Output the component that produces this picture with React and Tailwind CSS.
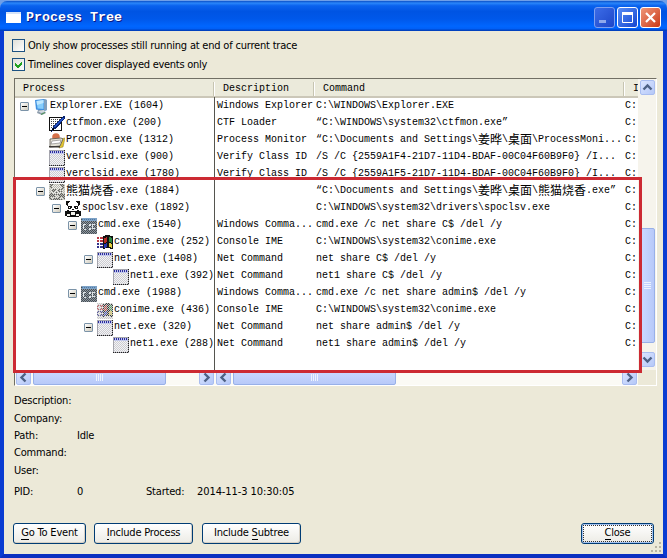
import React from "react";

const CJK = /([\u4e00-\u9fff]+)/;

// Fixed-pitch text: Latin cells are 6px wide, ideographs 12px.
function Cell({ children }) {
  return children.split(CJK).map((part, i) =>
    CJK.test(part) ? (
      <span key={i} className="-mt-[2px] font-['Noto_Sans_CJK_SC',sans-serif] text-[12px] leading-none">{part}</span>
    ) : (
      <span key={i}>{part}</span>
    )
  );
}

function Svg({ children }) {
  return (
    <svg width="16" height="16" viewBox="0 0 16 16" shapeRendering="crispEdges" className="block shrink-0">
      {children}
    </svg>
  );
}

function Dither({ id, color }) {
  return (
    <>
      <defs>
        <pattern id={id} width="2" height="2" patternUnits="userSpaceOnUse">
          <path d="M0 0h1v1H0zM1 1h1v1H1z" fill={color} />
        </pattern>
      </defs>
      <rect width="16" height="16" fill={`url(#${id})`} />
    </>
  );
}

function ExplorerIcon() {
  return (
    <svg width="16" height="16" viewBox="0 0 16 16" className="block shrink-0">
      <path d="M2 1l9-1 3 1v10l-3 1-8-1.500z" fill="#3f8fe0" />
      <path d="M3.500 2l7-1v9l-6-.5z" fill="#86cdfb" />
      <path d="M3.500 2l7-1v3L4 6z" fill="#bfe8ff" />
      <path d="M11 0l3 1v10l-3 1z" fill="#7f9fbe" />
      <path d="M5 11h6l2 3-4 2-5-2z" fill="#8d9cac" />
      <path d="M5 12l6-1 1 2-4 1z" fill="#d3dbe2" />
      <path d="M8 15l4-2v1l-4 2z" fill="#4f9a55" />
    </svg>
  );
}

function PenIcon() {
  return (
    <Svg>
      <path d="M0 1h13v14H0z" fill="#111" />
      <path d="M1 2h11v12H1z" fill="#fff" />
      <path d="M2 3.500h9M2 5.500h8M2 7.500h6M2 9.500h4M2 11.500h3" stroke="#444" strokeDasharray="1 1" />
      <path d="M15 0h1v2l-4 5-4 5-5 3-1 1 1-3 3-5 5-5z" fill="#0a2470" />
      <path d="M14 2L6 11" stroke="#2452c8" strokeWidth="1.500" />
      <path d="M4 12l-2 3 4-2z" fill="#000" />
    </Svg>
  );
}

function ProcmonIcon() {
  return (
    <svg width="16" height="16" viewBox="0 0 16 16" className="block shrink-0">
      <path d="M11 6l5-1-2 9-4 1z" fill="#e1c431" stroke="#8a7620" strokeWidth=".5" />
      <circle cx="7" cy="4" r="3.800" fill="#d5714a" />
      <path d="M1 6l11-1 2 1-3 7-10 1z" fill="#e4e2d6" stroke="#55524a" strokeWidth=".8" />
      <path d="M3 8l9-1-1 3-9 1z" fill="#fff" stroke="#777" strokeWidth=".6" />
      <path d="M0 13h11v1.500H0z" fill="#3d3a35" />
    </svg>
  );
}

function WindowIcon({ id }) {
  return (
    <Svg>
      <rect width="16" height="16" fill="#f3f3f5" />
      <Dither id={id} color="#cdcdd2" />
      <path d="M0 0h16v1H0zM0 0h1v16H0zM15 0h1v16h-1zM0 15h16v1H0z" fill="#a5a5ad" />
      <path d="M1 1h14v3H1z" fill="#c3c9ec" />
      <path d="M1 2h14" stroke="#2a2a9c" strokeWidth="2" strokeDasharray="1 1" />
      <path d="M15.500 0v16M0 15.500h16" stroke="#222" strokeDasharray="1 1" />
    </Svg>
  );
}

function PandaArt() {
  return (
    <>
      <path d="M1 0h4v1h6V0h4v4h-1v6H2V4H1z" fill="#111" />
      <path d="M4 1h8v1h1v3h1v4h-2v1H4V9H2V5h1V2h1z" fill="#fff" />
      <path d="M3 5h4v2H6v1H3zM9 5h4v3h-3V7H9zM7 8h2v1H7z" fill="#111" />
      <path d="M4 6h1v1H4zM11 6h1v1h-1z" fill="#fff" />
      <path d="M0 10h16v5h-2v1H2v-1H0z" fill="#111" />
      <path d="M6 11h4v3H6zM2 13h3v2H2zM11 13h3v2h-3z" fill="#f4f4ee" />
    </>
  );
}

function PandaIcon() {
  return <Svg><PandaArt /></Svg>;
}

function PandaGhostIcon() {
  return (
    <Svg>
      <rect width="16" height="16" fill="#dcdcd4" />
      <g opacity=".6"><PandaArt /></g>
      <Dither id="panda-ghost" color="#b8b8b0" />
    </Svg>
  );
}

function CmdIcon({ id }) {
  return (
    <Svg>
      <rect width="16" height="16" fill="#4a4e52" />
      <Dither id={id} color="#8d9aa4" />
      <path d="M1 0h15v3H1z" fill="#7da2c6" />
      <path d="M1 1.500h14" stroke="#4e78a4" strokeDasharray="1 1" />
      <path d="M5 6H3L2 7v3l1 1h2M8 6h1v1H8zM8 10h1v1H8zM14 7l-1-1-2 1v3l2 1 1-1" fill="none" stroke="#dfe5e8" />
    </Svg>
  );
}

function FlagArt() {
  return (
    <>
      <path d="M6 1l3-1h3l2 1h2v13h-2l-2-1H9l-2 1H6z" fill="#111" />
      <path d="M7 3l3-1v5L7 8z" fill="#b52b24" />
      <path d="M12 2l3 1v5l-3-1z" fill="#2d8a44" />
      <path d="M7 9l3-1v4l-3 1z" fill="#2636b0" />
      <path d="M12 8l3 1v4l-3-1z" fill="#e3cf3c" />
      <path d="M0 3h2M3 3h3M0 6h2M3 6h3" stroke="#b83a44" strokeWidth="2" />
      <path d="M0 9h2M3 9h3M0 12h2M3 12h3" stroke="#33338c" strokeWidth="2" />
    </>
  );
}

function FlagIcon() {
  return <Svg><FlagArt /></Svg>;
}

function FlagGhostIcon() {
  return (
    <Svg>
      <rect width="16" height="16" fill="#ededed" />
      <g opacity=".8"><FlagArt /></g>
      <Dither id="flag-ghost" color="#c8c8c8" />
    </Svg>
  );
}

const INDENT = ["pl-[5px]", "pl-[21px]", "pl-[37px]", "pl-[53px]", "pl-[69px]", "pl-[85px]"];

const ROWS = [
  { level: 0, open: true, icon: <ExplorerIcon />, name: "Explorer.EXE (1604)", desc: "Windows Explorer", cmd: "C:\\WINDOWS\\Explorer.EXE" },
  { level: 1, icon: <PenIcon />, name: "ctfmon.exe (200)", desc: "CTF Loader", cmd: "“C:\\WINDOWS\\system32\\ctfmon.exe”" },
  { level: 1, icon: <ProcmonIcon />, name: "Procmon.exe (1312)", desc: "Process Monitor", cmd: "“C:\\Documents and Settings\\姜晔\\桌面\\ProcessMoni..." },
  { level: 1, icon: <WindowIcon id="w1" />, name: "verclsid.exe (900)", desc: "Verify Class ID", cmd: "/S /C {2559A1F4-21D7-11D4-BDAF-00C04F60B9F0} /I..." },
  { level: 1, icon: <WindowIcon id="w2" />, name: "verclsid.exe (1780)", desc: "Verify Class ID", cmd: "/S /C {2559A1F5-21D7-11D4-BDAF-00C04F60B9F0} /I..." },
  { level: 1, open: true, icon: <PandaGhostIcon />, name: "熊猫烧香.exe (1884)", desc: "", cmd: "“C:\\Documents and Settings\\姜晔\\桌面\\熊猫烧香.exe”" },
  { level: 2, open: true, icon: <PandaIcon />, name: "spoclsv.exe (1892)", desc: "", cmd: "C:\\WINDOWS\\system32\\drivers\\spoclsv.exe" },
  { level: 3, open: true, icon: <CmdIcon id="c1" />, name: "cmd.exe (1540)", desc: "Windows Comma...", cmd: "cmd.exe /c net share C$ /del /y" },
  { level: 4, icon: <FlagIcon />, name: "conime.exe (252)", desc: "Console IME", cmd: "C:\\WINDOWS\\system32\\conime.exe" },
  { level: 4, open: true, icon: <WindowIcon id="w3" />, name: "net.exe (1408)", desc: "Net Command", cmd: "net share C$ /del /y" },
  { level: 5, icon: <WindowIcon id="w4" />, name: "net1.exe (392)", desc: "Net Command", cmd: "net1 share C$ /del /y" },
  { level: 3, open: true, icon: <CmdIcon id="c2" />, name: "cmd.exe (1988)", desc: "Windows Comma...", cmd: "cmd.exe /c net share admin$ /del /y" },
  { level: 4, icon: <FlagGhostIcon />, name: "conime.exe (436)", desc: "Console IME", cmd: "C:\\WINDOWS\\system32\\conime.exe" },
  { level: 4, open: true, icon: <WindowIcon id="w5" />, name: "net.exe (320)", desc: "Net Command", cmd: "net share admin$ /del /y" },
  { level: 5, icon: <WindowIcon id="w6" />, name: "net1.exe (288)", desc: "Net Command", cmd: "net1 share admin$ /del /y" },
];

function Expander({ open }) {
  return (
    <span className={`mt-px flex h-[9px] w-[9px] shrink-0 items-center justify-center rounded-[1px] ${open ? "border border-[#7b93a8] bg-gradient-to-br from-white to-[#cfcabb]" : ""}`}>
      {open && <span className="h-px w-[5px] bg-black" />}
    </span>
  );
}

function ProcessRow({ row }) {
  return (
    <div className="flex h-[17px] shrink-0 leading-[17px]">
      <div className={`flex h-[17px] w-[200px] shrink-0 items-center border-r border-[#55554f] ${INDENT[row.level]}`}>
        <Expander open={row.open} />
        <span className="ml-1 mt-0.5">{row.icon}</span>
        <span className="ml-px flex items-center"><Cell>{row.name}</Cell></span>
      </div>
      <div className="w-[101px] shrink-0 pl-0.5">{row.desc}</div>
      <div className="flex w-[309px] shrink-0 items-center"><Cell>{row.cmd}</Cell></div>
      <div>C:</div>
    </div>
  );
}

const ARROWS = {
  up: "M3.500 9.500L7.500 5.500L11.500 9.500",
  down: "M3.500 5.500L7.500 9.500L11.500 5.500",
  left: "M9.500 3.500L5.500 7.500L9.500 11.500",
  right: "M5.500 3.500L9.500 7.500L5.500 11.500",
};

function ScrollButton({ dir }) {
  return (
    <div className="flex h-[15px] w-[15px] shrink-0 items-center justify-center rounded-[2px] border border-[#a9bdf0] bg-gradient-to-br from-[#dbe5ff] to-[#b5c8f8]">
      <svg width="15" height="15" viewBox="0 0 15 15" className="shrink-0">
        <path d={ARROWS[dir]} fill="none" stroke="#4d6185" strokeWidth="2.400" />
      </svg>
    </div>
  );
}

function Grip({ vertical }) {
  return (
    <div className={`flex gap-px ${vertical ? "flex-col" : ""}`}>
      {[0, 1, 2, 3].map((i) => (
        <span key={i} className={vertical ? "h-px w-[7px] bg-[#eef4fe]" : "h-[7px] w-px bg-[#eef4fe]"} />
      ))}
    </div>
  );
}

function HScroll({ width, thumb }) {
  return (
    <div className={`flex h-[15px] shrink-0 items-center justify-between bg-[#fbfaf5] px-px ${width}`}>
      <div className="flex gap-[2px]">
        <ScrollButton dir="left" />
        <div className={`flex h-[15px] items-center justify-center rounded-[2px] border border-[#98b0e8] bg-gradient-to-b from-[#cbd9ff] to-[#b7c9f9] ${thumb}`}>
          <Grip />
        </div>
      </div>
      <ScrollButton dir="right" />
    </div>
  );
}

function CheckBox({ checked, label, spacing }) {
  return (
    <div className="flex h-[19px] items-center gap-[3px]">
      <span className="flex h-[13px] w-[13px] items-center justify-center border border-[#1d5281] bg-gradient-to-br from-[#dfdfd8] to-white">
        {checked && (
          <svg width="11" height="11" viewBox="0 0 11 11" shapeRendering="crispEdges">
            <path d="M2 4v3l2 2h1l4-4V2L4.500 6.500z" fill="#21a121" />
          </svg>
        )}
      </span>
      <span className={`mt-px whitespace-nowrap leading-[14px] ${spacing}`}>{label}</span>
    </div>
  );
}

function Button({ pre, hot, post, width, focused }) {
  return (
    <button className={`flex h-[21px] items-center justify-center rounded-[3px] border border-[#003c74] bg-gradient-to-b from-white to-[#ecebe5] p-px ${width} ${focused ? "shadow-[inset_0_0_0_1px_#a5c3f0]" : "shadow-[inset_-1px_-1px_0_#d6d0c5]"}`}>
      <span className={`flex h-full w-full items-center justify-center whitespace-pre ${focused ? "border border-dotted border-[#333]" : ""}`}>
        {pre}
        <span className="border-b border-black leading-[12px]">{hot}</span>
        {post}
      </span>
    </button>
  );
}

function CaptionButton({ tone, children }) {
  return (
    <span className={`flex h-[21px] w-[21px] items-center justify-center rounded-[3px] border ${tone}`}>
      <svg width="19" height="19" viewBox="0 0 19 19" shapeRendering="geometricPrecision">{children}</svg>
    </span>
  );
}

function TitleBar() {
  return (
    <div className="flex h-[30px] shrink-0 items-center rounded-t-[7px] bg-[linear-gradient(180deg,#0a50c8_0%,#2a86fa_7%,#0a62ee_16%,#0054e3_35%,#0058ea_60%,#0066ff_84%,#0060f8_92%,#0038b0_100%)] pl-[6px] pr-[6px] pt-[3px]">
      <span className="mt-[-1px] h-[11px] w-[15px] border-t-2 border-[#d5e3f8] bg-white" />
      <span className="ml-[5px] mt-px font-['Liberation_Mono',monospace] text-[13.333px] font-bold leading-none text-white [text-shadow:1px_1px_0_#0a1883]">Process Tree</span>
      <div className="ml-auto flex gap-[2px]">
        <CaptionButton tone="border-[#7e9ff0] bg-gradient-to-br from-[#3c6ce8] to-[#1e46c8]">
          <path d="M4 12h7v3H4z" fill="#8fa9ec" />
        </CaptionButton>
        <CaptionButton tone="border-white bg-gradient-to-br from-[#5a8df5] to-[#1344d0]">
          <path d="M4.500 5.500h10v9h-10z" fill="none" stroke="#fff" />
          <path d="M4 4h11v3H4z" fill="#fff" />
        </CaptionButton>
        <CaptionButton tone="border-white bg-gradient-to-br from-[#ee9678] to-[#c9340e]">
          <path d="M5 5l9 9M14 5l-9 9" stroke="#fff" strokeWidth="2.200" />
        </CaptionButton>
      </div>
    </div>
  );
}

function Detail({ label, value, height }) {
  return (
    <div className={`flex items-center ${height}`}>
      <span className="w-[63px]">{label}</span>
      <span>{value}</span>
    </div>
  );
}

export default function App() {
  return (
    <div className="flex h-[558px] w-[667px] flex-col overflow-hidden bg-[#6f9fe8] pt-px font-['DejaVu_Sans_Condensed','DejaVu_Sans',sans-serif] text-[11px] text-black">
      <TitleBar />
      <div className="flex flex-1 flex-col border-x-[4px] border-b-[4px] border-[#0a3cd2] bg-[#ece9d8] [border-bottom-color:#0a2fc0]">
        <div className="mt-[5px] pl-2">
          <CheckBox label="Only show processes still running at end of current trace" spacing="tracking-[-0.2px]" />
          <CheckBox checked label="Timelines cover displayed events only" spacing="tracking-[-0.27px]" />
        </div>

        <div className="relative ml-[10px] mt-[4px] flex h-[308px] w-[643px] shrink-0 flex-col border border-b-white border-l-[#716f64] border-r-white border-t-[#716f64] bg-[#ece9d8] font-['Liberation_Mono','Noto_Sans_CJK_SC',monospace] text-[10px]">
          <div className="flex h-[291px] shrink-0">
            <div className="flex w-[623px] flex-col overflow-hidden whitespace-pre bg-white">
              <div className="flex h-[19px] shrink-0 items-center border-b-2 border-[#cbc7b8] bg-[#ebeadb] pt-[2px] leading-none">
                <span className="h-[14px] w-[199px] shrink-0 border-r border-[#c7c5b2] pl-[8px] leading-[14px]">Process</span>
                <span className="h-[14px] w-[100px] shrink-0 border-l border-r border-l-white border-r-[#c7c5b2] pl-[8px] leading-[14px]">Description</span>
                <span className="h-[14px] w-[310px] shrink-0 border-l border-r border-l-white border-r-[#c7c5b2] pl-[8px] leading-[14px]">Command</span>
                <span className="h-[14px] shrink-0 border-l border-white pl-[8px] leading-[14px]">I</span>
              </div>
              <div className="-mt-px flex flex-1 flex-col">
                {ROWS.map((row, i) => <ProcessRow key={i} row={row} />)}
                <div className="w-[200px] flex-1 border-r border-[#55554f]" />
              </div>
            </div>
            <div className="flex w-[18px] flex-col items-center bg-[#f6f4ec] pl-px pt-px">
              <ScrollButton dir="up" />
              <div className="mt-[133px] flex h-[115px] w-[15px] items-center justify-center rounded-[2px] border border-[#98b0e8] bg-gradient-to-r from-[#cbd9ff] to-[#b7c9f9]">
                <Grip vertical />
              </div>
              <div className="mt-[9px]"><ScrollButton dir="down" /></div>
            </div>
          </div>
          <div className="flex">
            <HScroll width="w-[200px]" thumb="w-[133px]" />
            <HScroll width="w-[423px]" thumb="w-[163px]" />
          </div>
          <div className="pointer-events-none absolute -left-[2px] top-[98px] h-[196px] w-[629px] border-[3px] border-[#cc2a33]" />
        </div>

        <div className="mt-[6px] flex flex-col pl-[10px] tracking-[-0.2px]">
          <Detail label="Description:" value="" height="h-[18px]" />
          <Detail label="Company:" value="" height="h-[18px]" />
          <Detail label="Path:" value="Idle" height="h-[17px]" />
          <Detail label="Command:" value="" height="h-[17px]" />
          <Detail label="User:" value="" height="h-[18px]" />
          <div className="mt-[3px] flex h-[18px] items-center">
            <span className="w-[63px]">PID:</span>
            <span className="w-[69px]">0</span>
            <span className="w-[51px]">Started:</span>
            <span className="tracking-[-0.08px]">2014-11-3 10:30:05</span>
          </div>
        </div>

        <div className="mt-[22px] flex pl-[9px] pr-[9px] tracking-[-0.2px]">
          <Button hot="G" post="o To Event" width="w-[73px]" />
          <div className="ml-2"><Button hot="I" post="nclude Process" width="w-[99px]" /></div>
          <div className="ml-[9px]"><Button pre="Include " hot="S" post="ubtree" width="w-[99px]" /></div>
          <div className="ml-auto"><Button hot="C" post="lose" width="w-[73px]" focused /></div>
        </div>
        <div className="mt-auto flex justify-end pb-px pr-px">
          <svg width="11" height="11" viewBox="0 0 11 11" className="-mt-[3px]" shapeRendering="crispEdges">
            <path d="M8 0h2v2H8zM4 4h2v2H4zM8 4h2v2H8zM0 8h2v2H0zM4 8h2v2H4zM8 8h2v2H8z" fill="#b8b4a3" />
          </svg>
        </div>
      </div>
    </div>
  );
}
